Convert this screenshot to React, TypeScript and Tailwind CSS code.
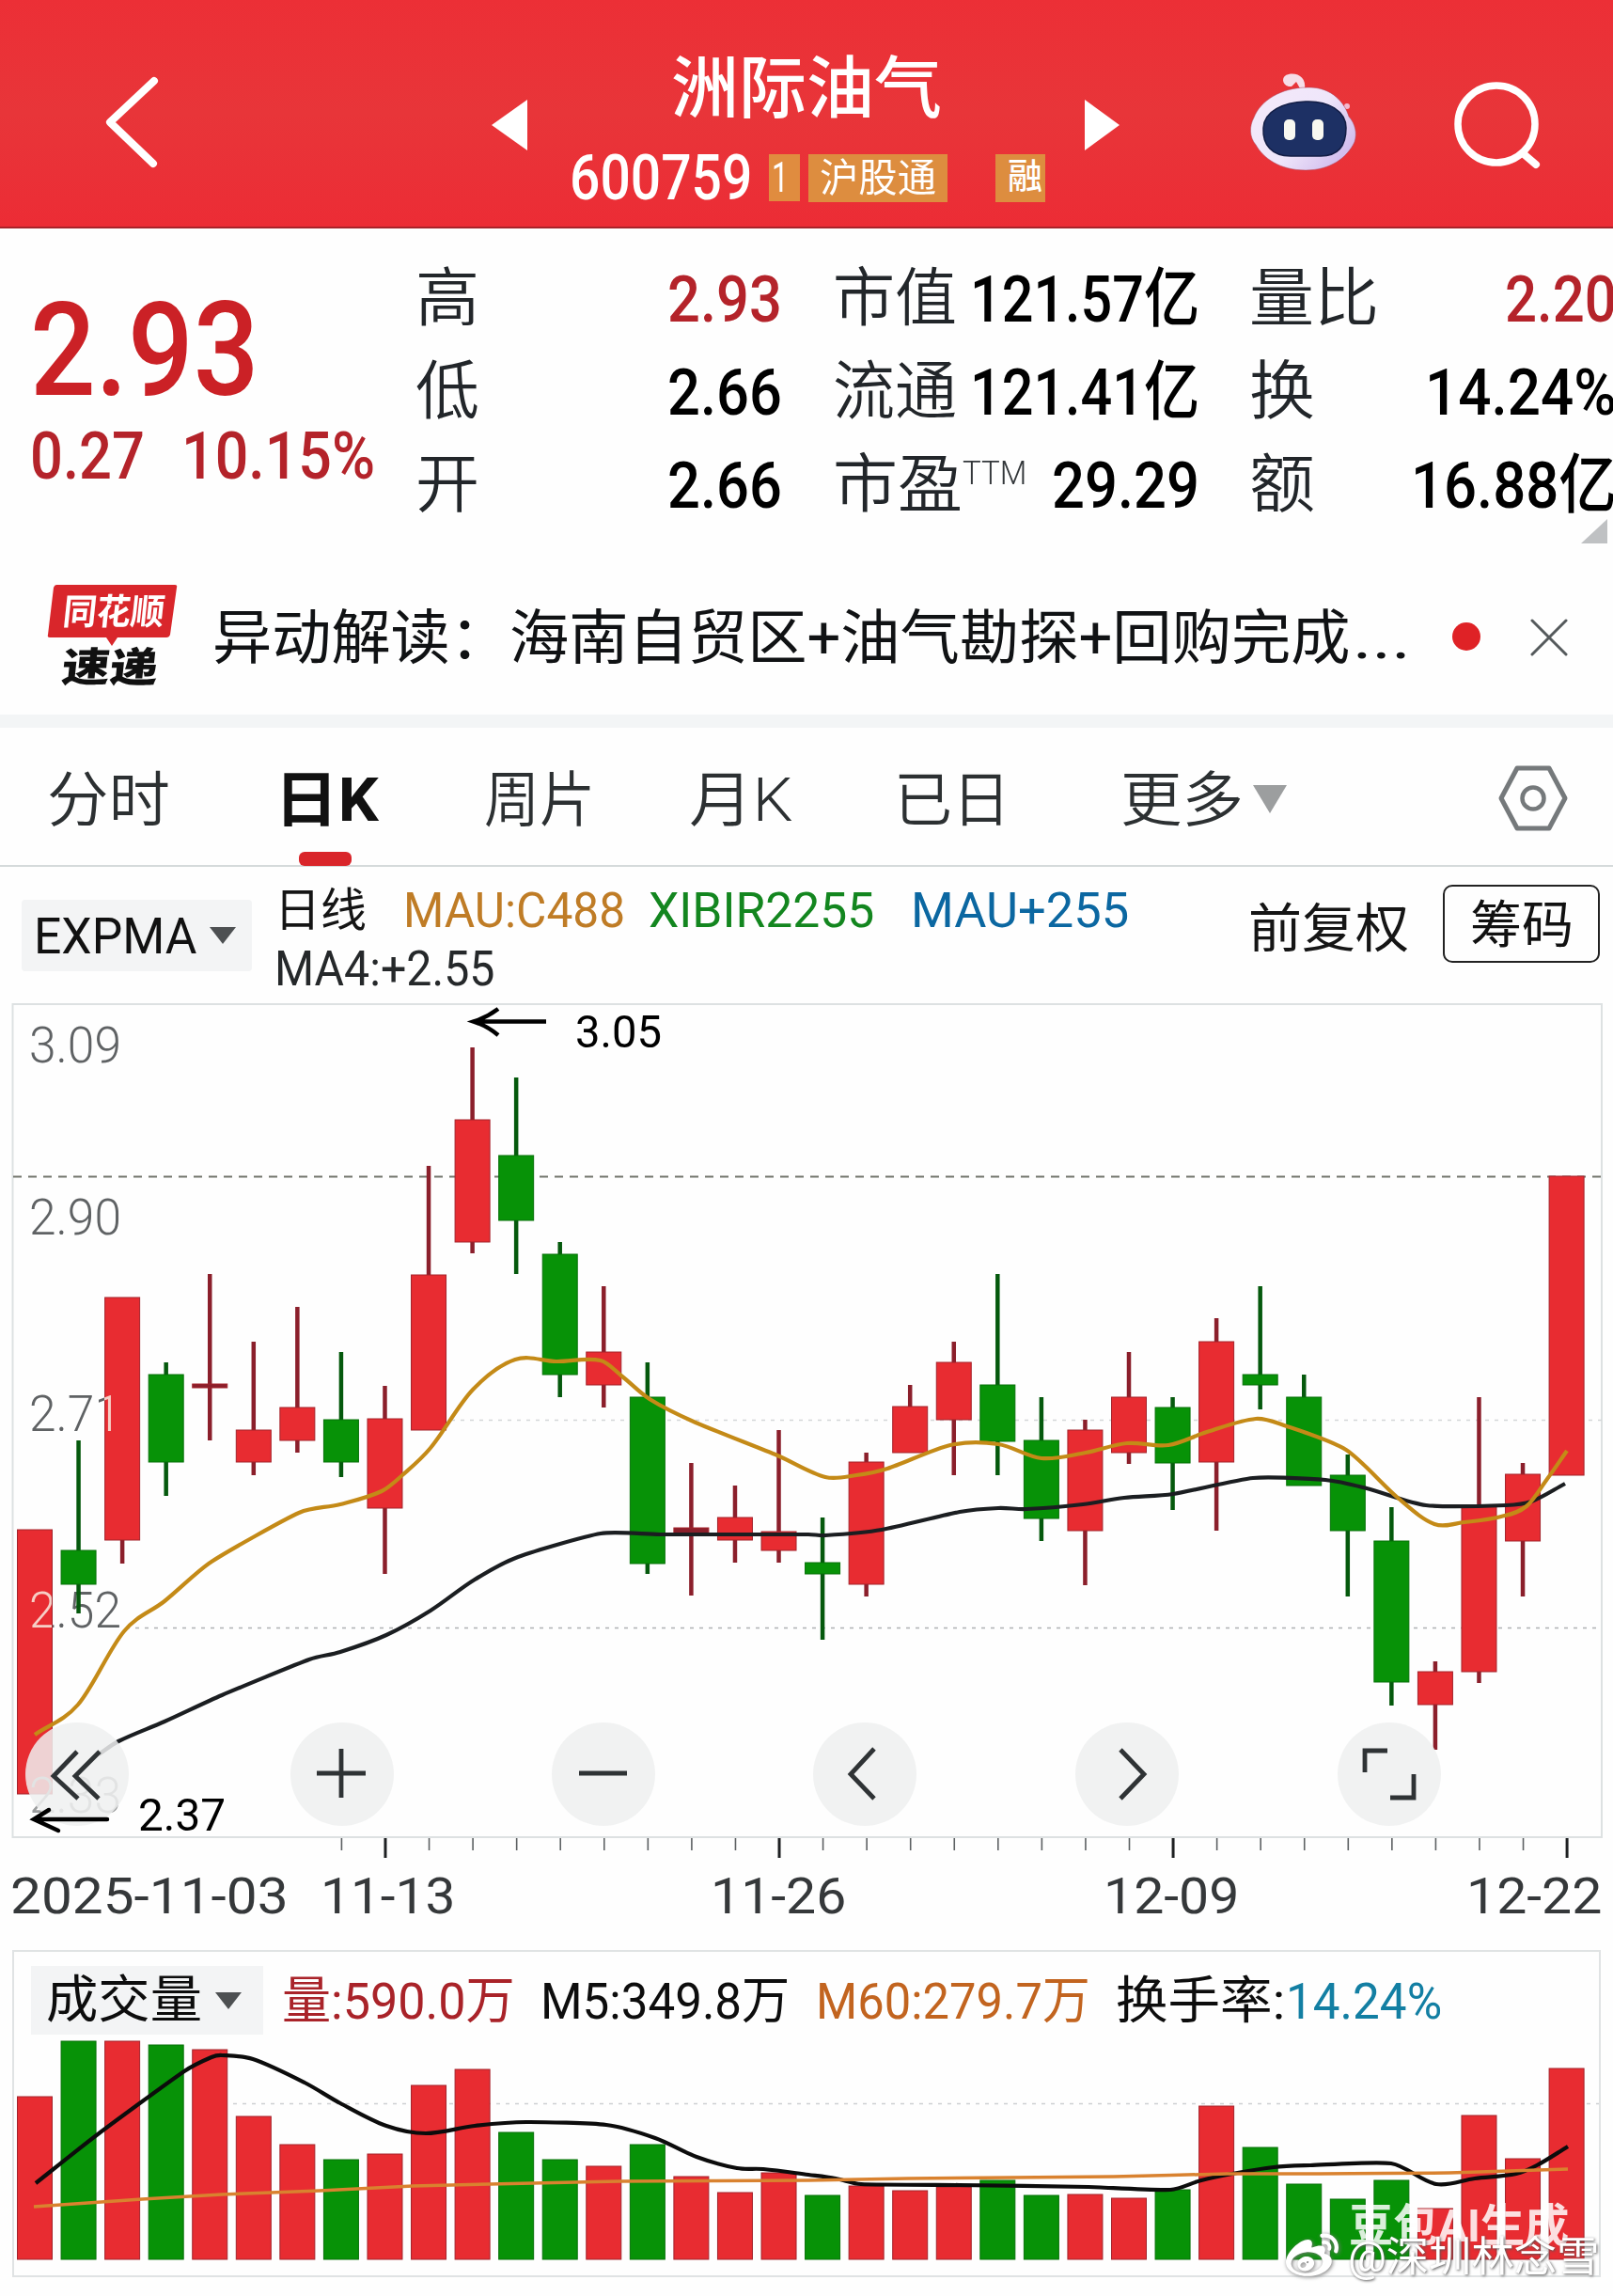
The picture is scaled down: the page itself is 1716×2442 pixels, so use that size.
import { useLayoutEffect, useRef, useState } from 'react';
import { FaWeibo } from 'react-icons/fa';

const FONT = 'font-[Roboto,"Noto_Sans_CJK_SC",sans-serif]';

const RED = '#e82c31';
const GREEN = '#079207';

const STEP = 46.56;
const FIRST = 37;
const BAR = 37;

type Candle = { high: number; top: number; bottom: number; low: number; up: boolean; vol: number };

const c = (high: number, top: number, bottom: number, low: number, up: boolean, vol: number): Candle => ({
  high, top, bottom, low, up, vol,
});

// y values in page pixels: high, body top, body bottom, low, up/down, volume bar top
const candles: Candle[] = [
  c(1627, 1627, 1908, 1908, true, 2230),
  c(1532, 1649, 1685, 1716, false, 2171),
  c(1380, 1380, 1638, 1663, true, 2171),
  c(1449, 1462, 1555, 1591, false, 2175),
  c(1355, 1472, 1476, 1532, true, 2180),
  c(1427, 1521, 1555, 1569, true, 2251),
  c(1390, 1497, 1532, 1545, true, 2281),
  c(1438, 1510, 1555, 1571, false, 2297),
  c(1474, 1509, 1604, 1674, true, 2291),
  c(1240, 1356, 1521, 1521, true, 2218),
  c(1114, 1191, 1321, 1333, true, 2201),
  c(1146, 1229, 1298, 1355, false, 2268),
  c(1321, 1334, 1462, 1486, false, 2297),
  c(1368, 1438, 1473, 1497, true, 2304),
  c(1449, 1486, 1663, 1674, false, 2281),
  c(1556, 1625, 1631, 1697, true, 2315),
  c(1580, 1614, 1638, 1662, true, 2332),
  c(1521, 1629, 1649, 1662, true, 2311),
  c(1614, 1662, 1674, 1744, false, 2335),
  c(1545, 1555, 1685, 1698, true, 2325),
  c(1473, 1496, 1545, 1545, true, 2330),
  c(1427, 1449, 1510, 1569, true, 2326),
  c(1355, 1473, 1533, 1569, false, 2319),
  c(1486, 1532, 1615, 1639, false, 2335),
  c(1510, 1521, 1628, 1686, true, 2334),
  c(1438, 1486, 1545, 1557, true, 2338),
  c(1486, 1497, 1556, 1606, false, 2329),
  c(1402, 1427, 1555, 1628, true, 2240),
  c(1368, 1462, 1473, 1499, false, 2284),
  c(1462, 1486, 1580, 1580, false, 2323),
  c(1547, 1569, 1628, 1698, false, 2339),
  c(1603, 1639, 1789, 1814, false, 2319),
  c(1767, 1778, 1813, 1861, true, 2349),
  c(1486, 1602, 1778, 1790, true, 2250),
  c(1556, 1568, 1639, 1698, true, 2296),
  c(1251, 1251, 1569, 1569, true, 2200),
];

const goldLine: [number, number][] = [
  [37, 1845], [83, 1813], [132, 1735], [175, 1703], [225, 1661], [318, 1609], [362, 1600], [406, 1586],
  [428, 1569], [458, 1540], [503, 1478], [548, 1446], [592, 1448], [639, 1447], [662, 1464], [691, 1488],
  [740, 1513], [827, 1548], [878, 1571], [911, 1569], [944, 1562], [1011, 1537], [1062, 1536], [1108, 1551],
  [1155, 1545], [1199, 1535], [1243, 1537], [1284, 1523], [1336, 1509], [1366, 1516], [1432, 1542],
  [1487, 1593], [1526, 1621], [1558, 1619], [1597, 1613], [1624, 1602], [1646, 1573], [1667, 1543],
];

const blackLine: [number, number][] = [
  [105, 1866], [126, 1852], [175, 1831], [236, 1803], [329, 1765], [362, 1757], [411, 1739], [458, 1713],
  [505, 1680], [551, 1656], [639, 1631], [702, 1632], [860, 1632], [878, 1633], [938, 1627], [1021, 1608],
  [1062, 1604], [1092, 1605], [1152, 1600], [1196, 1593], [1248, 1589], [1333, 1572], [1410, 1574],
  [1454, 1583], [1517, 1601], [1602, 1601], [1629, 1597], [1665, 1578],
];

const volBlack: [number, number][] = [
  [38, 2322], [104, 2270], [196, 2203], [225, 2188], [236, 2186], [269, 2190], [324, 2215], [362, 2237],
  [411, 2261], [453, 2269], [505, 2261], [560, 2257], [645, 2260], [697, 2274], [741, 2294], [784, 2306],
  [812, 2307], [860, 2313], [889, 2317], [916, 2323], [1020, 2324], [1158, 2326], [1245, 2329], [1278, 2319],
  [1311, 2312], [1355, 2305], [1394, 2303], [1480, 2301], [1528, 2323], [1569, 2317], [1613, 2312],
  [1635, 2303], [1668, 2283],
];

const volOrange: [number, number][] = [
  [36, 2347], [151, 2339], [236, 2334], [340, 2330], [439, 2325], [521, 2323], [658, 2320], [860, 2319],
  [966, 2317], [1185, 2315], [1306, 2312], [1404, 2312], [1542, 2311], [1668, 2307],
];

// Cubic through every point, slopes taken from the neighbours
const smooth = (pts: [number, number][]) => {
  const slope = (i: number) => {
    const a = pts[Math.max(i - 1, 0)];
    const b = pts[Math.min(i + 1, pts.length - 1)];
    return (b[1] - a[1]) / (b[0] - a[0]);
  };
  let d = `M${pts[0][0]} ${pts[0][1]}`;
  for (let i = 0; i < pts.length - 1; i++) {
    const [x1, y1] = pts[i];
    const [x2, y2] = pts[i + 1];
    const h = Math.min((x2 - x1) / 3, 16);
    d += ` C${x1 + h} ${y1 + slope(i) * h} ${x2 - h} ${y2 - slope(i + 1) * h} ${x2} ${y2}`;
  }
  return d;
};

// Text squeezed or stretched to an exact width
const Fit = ({ w, className = '', children }: { w: number; className?: string; children: string }) => {
  const ref = useRef<HTMLSpanElement>(null);
  const [scale, setScale] = useState(1);

  useLayoutEffect(() => {
    if (ref.current) setScale(w / ref.current.offsetWidth);
  }, [w]);

  return (
    <span className={`block shrink-0 whitespace-nowrap ${className}`} style={{ width: w }}>
      <span ref={ref} className="inline-block origin-left" style={{ transform: `scaleX(${scale})` }}>
        {children}
      </span>
    </span>
  );
};

const Header = () => (
  <header className="flex h-[243px] border-b-2 border-[#a8232a] bg-linear-to-b from-[#ec2f36] via-[#e83539] to-[#ec2c35] text-white">
    <svg className="mt-[80px] ml-[108px] h-[102px] w-[64px] shrink-0" viewBox="0 0 64 102" fill="none">
      <path d="M56 6 L9 50 L55 94" stroke="white" strokeWidth="8" strokeLinecap="round" strokeLinejoin="round" />
    </svg>
    <svg className="mt-[106px] ml-[351px] h-[54px] w-[38px] shrink-0" viewBox="0 0 38 54">
      <path d="M38 0 V54 L0 27 Z" fill="white" />
    </svg>
    <div className="ml-[45px] w-[514px] shrink-0 pt-[45px]">
      <Fit w={288} className="ml-[108px] text-[72px] leading-[100px] font-medium">洲际油气</Fit>
      <div className="mt-[18px] flex h-[52px] items-center">
        <Fit w={194} className="text-[67px] leading-[52px] font-medium">600759</Fit>
        <div className="ml-[18px] flex h-[50px] w-[33px] bg-[#e08c3f]">
          <Fit w={18} className="ml-[3px] text-[44px] leading-[50px]">1</Fit>
        </div>
        <div className="ml-[9px] flex h-[51px] w-[148px] justify-center bg-[#dd8d3f]">
          <Fit w={124} className="text-[42px] leading-[51px]">沪股通</Fit>
        </div>
        <div className="ml-[51px] flex h-[51px] w-[53px] items-center bg-[#dd8d3f]">
          <Fit w={37} className="ml-[13px] text-[37px] leading-[48px] font-medium">融</Fit>
        </div>
      </div>
    </div>
    <svg className="mt-[106px] ml-[34px] h-[54px] w-[37px] shrink-0" viewBox="0 0 37 54">
      <path d="M0 0 V54 L37 27 Z" fill="white" />
    </svg>
    <svg className="mt-[76px] ml-[138px] h-[108px] w-[116px] shrink-0" viewBox="0 0 116 108">
      <defs>
        <linearGradient id="head" x1="0" y1="0" x2="1" y2="0.6">
          <stop offset="0" stopColor="#f4e9fa" />
          <stop offset="0.6" stopColor="#efe6fa" />
          <stop offset="1" stopColor="#d3bfee" />
        </linearGradient>
      </defs>
      <path d="M42 16 C34 14 34 4 42 3 C52 1 61 7 59 19 L54 18 L50 11 L45 16 Z" fill="#f6dde8" />
      <circle cx="104" cy="37" r="3" fill="#f3b9cf" />
      <path d="M62 17 C88 16 102 34 106 48 C113 56 115 66 112 75 C104 92 86 105 60 105 C32 105 15 92 7 78 C0 70 0 58 5 49 C12 31 34 17 62 17 Z" fill="url(#head)" stroke="#a8485e" strokeOpacity="0.5" strokeWidth="1" />
      <path d="M60 32 C84 31 103 42 103 60 C103 80 94 90 76 90 H44 C24 90 14 78 15 60 C16 42 36 33 60 32 Z" fill="#1d3064" stroke="#121d45" strokeWidth="1.5" />
      <rect x="37" y="51" width="12" height="22" rx="5" fill="#f8f8f0" />
      <rect x="67" y="51" width="12" height="22" rx="5" fill="#f8f8f0" />
    </svg>
    <svg className="mt-[84px] ml-[98px] h-[98px] w-[100px] shrink-0" viewBox="0 0 100 98" fill="none" stroke="white">
      <circle cx="49" cy="48" r="41" strokeWidth="7.5" />
      <path d="M77 79 L91 91" strokeWidth="8" strokeLinecap="round" />
    </svg>
  </header>
);

type Cell = { label: string; lw: number; value: string; vw: number; red?: boolean; tag?: string };

const columns: { box: string; cells: Cell[] }[] = [
  {
    box: 'ml-[442px] w-[390px]',
    cells: [
      { label: '高', lw: 68, value: '2.93', vw: 122, red: true },
      { label: '低', lw: 68, value: '2.66', vw: 122 },
      { label: '开', lw: 68, value: '2.66', vw: 122 },
    ],
  },
  {
    box: 'ml-[54px] w-[390px]',
    cells: [
      { label: '市值', lw: 132, value: '121.57亿', vw: 244 },
      { label: '流通', lw: 132, value: '121.41亿', vw: 244 },
      { label: '市盈', lw: 138, value: '29.29', vw: 157, tag: 'TTM' },
    ],
  },
  {
    box: 'ml-[53px] w-[391px]',
    cells: [
      { label: '量比', lw: 138, value: '2.20', vw: 119, red: true },
      { label: '换', lw: 70, value: '14.24%', vw: 204 },
      { label: '额', lw: 70, value: '16.88亿', vw: 219 },
    ],
  },
];

const Quote = () => (
  <section className="relative flex h-[354px] overflow-hidden pt-[26px]">
    <div className="absolute top-[59px] left-[32px] text-[#cb2126]">
      <Fit w={244} className="text-[139px] leading-[142px] font-medium">2.93</Fit>
      <div className="mt-[6px] flex text-[70px] leading-[70px] font-medium text-[#b4232a]">
        <Fit w={122}>0.27</Fit>
        <Fit w={206} className="ml-[39px]">10.15%</Fit>
      </div>
    </div>
    {columns.map((col) => (
      <div key={col.box} className={`shrink-0 ${col.box}`}>
        {col.cells.map((cell) => (
          <div key={cell.label} className="flex h-[99px] items-center justify-between text-[68px] leading-[99px]">
            <div className="flex">
              <Fit w={cell.lw} className="font-[350] text-[#22262a]">{cell.label}</Fit>
              {cell.tag && <Fit w={68} className="-mt-[13px] text-[35px] font-light text-[#33373a]">{cell.tag}</Fit>}
            </div>
            <Fit w={cell.vw} className={`text-[69px] font-medium ${cell.red ? 'text-[#b4232a]' : 'text-black'}`}>
              {cell.value}
            </Fit>
          </div>
        ))}
      </div>
    ))}
    <svg className="absolute top-[309px] left-[1682px] h-[26px] w-[28px]" viewBox="0 0 28 26">
      <path d="M28 0 V26 H0 Z" fill="#bfc1c3" />
    </svg>
  </section>
);

const News = () => (
  <section className="flex h-[163px] items-start">
    <div className="relative mt-[24px] ml-[50px] h-[112px] w-[140px] shrink-0">
      <svg className="absolute inset-0 h-full w-full" viewBox="0 0 140 112">
        <path d="M10 1 H136 Q139 1 138 4 L131 54 Q130 57 127 57 H75 L69 66 L63 57 H3 Q0 57 1 54 L7 4 Q8 1 10 1 Z" fill="#d9262b" />
      </svg>
      <Fit w={108} className="absolute top-[9px] left-[17px] -skew-x-6 text-[38px] leading-[42px] font-bold text-white">同花顺</Fit>
      <Fit w={102} className="absolute top-[65px] left-[16px] -skew-x-6 text-[43px] leading-[48px] font-black text-[#111]">速递</Fit>
    </div>
    <Fit w={316} className="mt-[35px] ml-[36px] text-[63px] leading-[94px] text-[#101214]">异动解读：</Fit>
    <Fit w={895} className="mt-[35px] text-[63px] leading-[94px] text-[#101214]">海南自贸区+油气勘探+回购完成</Fit>
    <Fit w={62} className="mt-[35px] ml-[2px] text-[63px] leading-[94px] text-[#101214]">...</Fit>
    <span className="mt-[65px] ml-[44px] h-[30px] w-[30px] shrink-0 rounded-full bg-[#df2226]" />
    <svg className="mt-[61px] ml-[52px] h-[40px] w-[42px] shrink-0" viewBox="0 0 42 40">
      <path d="M3 2 L39 38 M39 2 L3 38" stroke="#555a5c" strokeWidth="3" strokeLinecap="round" />
    </svg>
  </section>
);

const tabs = [
  { name: '分时', w: 131, gap: 'ml-[50px]' },
  { name: '日K', w: 111, gap: 'ml-[111px]', active: true },
  { name: '周片', w: 118, gap: 'ml-[112px]' },
  { name: '月K', w: 110, gap: 'ml-[100px]' },
  { name: '已日', w: 124, gap: 'ml-[108px]' },
  { name: '更多', w: 131, gap: 'ml-[117px]' },
];

const Tabs = () => (
  <nav className="flex h-[162px] border-t-[14px] border-b-2 border-t-[#f3f5f6] border-b-[#d5dadb]">
    {tabs.map((tab) => (
      <div key={tab.name} className={`relative shrink-0 ${tab.gap}`}>
        <Fit w={tab.w} className={`text-[64px] leading-[156px] ${tab.active ? 'font-bold text-[#111]' : 'font-[350] text-[#2c3032]'}`}>
          {tab.name}
        </Fit>
        {tab.active && <span className="absolute top-[132px] left-[26px] h-[15px] w-[56px] rounded-[6px] bg-[#d9252a]" />}
      </div>
    ))}
    <svg className="mt-[61px] ml-[10px] h-[30px] w-[36px] shrink-0" viewBox="0 0 36 30">
      <path d="M0 0 H36 L18 30 Z" fill="#9c9e9f" />
    </svg>
    <svg className="mt-[39px] ml-[223px] h-[72px] w-[78px] shrink-0" viewBox="0 0 78 72" fill="none" stroke="#75797b">
      <path d="M22 4 H56 L73 36 L56 68 H22 L5 36 Z" strokeWidth="5" strokeLinejoin="round" />
      <circle cx="39" cy="36" r="11.5" strokeWidth="4.5" />
    </svg>
  </nav>
);

const Caret = ({ className }: { className: string }) => (
  <svg className={`h-[18px] w-[28px] shrink-0 ${className}`} viewBox="0 0 28 18">
    <path d="M0 0 H28 L14 18 Z" fill="#4d5052" />
  </svg>
);

const Indicators = () => (
  <section className="flex h-[145px] items-start">
    <div className="mt-[35px] ml-[23px] flex h-[76px] w-[245px] shrink-0 items-center rounded bg-[#f3f4f5]">
      <Fit w={173} className="ml-[13px] pt-[2px] text-[54px] leading-[76px] text-[#111]">EXPMA</Fit>
      <Caret className="ml-[14px]" />
    </div>
    <div className="mt-[14px] ml-[24px] w-[920px] shrink-0 text-[52px] leading-[66px]">
      <div className="flex">
        <Fit w={98} className="text-[49px] text-[#151515]">日线</Fit>
        <Fit w={236} className="ml-[39px] text-[#bf7c26]">MAU:C488</Fit>
        <Fit w={240} className="ml-[25px] text-[#13861f]">XIBIR2255</Fit>
        <Fit w={232} className="ml-[39px] text-[#0b67a1]">MAU+255</Fit>
      </div>
      <Fit w={234} className="-mt-[4px] text-[#25282a]">MA4:+2.55</Fit>
    </div>
    <Fit w={171} className="mt-[26px] ml-[116px] text-[56px] leading-[80px] text-[#151515]">前复权</Fit>
    <div className="mt-[19px] ml-[36px] flex h-[83px] w-[167px] shrink-0 justify-center rounded-[10px] border-2 border-[#222]">
      <Fit w={110} className="text-[54px] leading-[83px] text-[#111]">筹码</Fit>
    </div>
  </section>
);

const controls = [
  { x: 'left-[27px]', d: 'M55 31 L30 57 L56 81 M79 31 L53 57 L78 81' },
  { x: 'left-[309px]', d: 'M28 54 H80 M54 28 V80' },
  { x: 'left-[587px]', d: 'M29 54 H80' },
  { x: 'left-[865px]', d: 'M65 28 L40 55 L65 81' },
  { x: 'left-[1144px]', d: 'M48 29 L73 55 L48 81' },
  { x: 'left-[1423px]', d: 'M53 30 H29 V53 M56 80 H81 V55' },
];

const gridLabels = [
  { text: '3.09', y: 1130 },
  { text: '2.90', y: 1313 },
  { text: '2.71', y: 1522 },
  { text: '2.52', y: 1731 },
];

const PriceChart = () => (
  <section className="relative h-[913px]">
    <svg className="block h-[913px] w-[1716px]" viewBox="0 1067 1716 913">
      <path d="M13.5 1068 H1704 V1954 H13.5 Z" fill="none" stroke="#dde1e2" strokeWidth="2" />
      <path d="M14 1251.500 H1704" stroke="#72756c" strokeWidth="1.8" strokeDasharray="9 7" />
      <path d="M480 1510.500 H1704" stroke="#d4d6d8" strokeWidth="1.6" strokeDasharray="4 6" />
      <path d="M134 1731.500 H1704" stroke="#aeb1b3" strokeWidth="1.6" strokeDasharray="4 6" />
      {gridLabels.map((l) => (
        <text key={l.text} x="31" y={l.y} fontSize="53" textLength="98" lengthAdjust="spacingAndGlyphs" fill="#5f6264" fontWeight="350">
          {l.text}
        </text>
      ))}
      {candles.map((k, i) => {
        const x = FIRST + i * STEP;
        return (
          <g key={i}>
            <path d={`M${x} ${k.high} V${k.low}`} stroke={k.up ? '#8b1f2b' : '#05590d'} strokeWidth="4.5" />
            <rect
              x={x - BAR / 2}
              y={k.top}
              width={BAR}
              height={k.bottom - k.top}
              fill={k.bottom - k.top < 8 ? '#8b1f2b' : k.up ? RED : GREEN}
              stroke={k.up ? '#a3222b' : '#067008'}
              strokeWidth="1"
            />
          </g>
        );
      })}
      <clipPath id="overlap">
        <path d="M18 1627 h37 v281 h-37 Z M111 1380 h38 v258 h-38 Z" />
      </clipPath>
      <g clipPath="url(#overlap)" fill="#f6cfc6" fontSize="53" fontWeight="350">
        <text x="31" y="1522" textLength="98" lengthAdjust="spacingAndGlyphs">2.71</text>
        <text x="31" y="1731" textLength="98" lengthAdjust="spacingAndGlyphs">2.52</text>
      </g>
      <path d={smooth(blackLine)} fill="none" stroke="#1b1e21" strokeWidth="4.2" strokeLinejoin="round" />
      <path d={smooth(goldLine)} fill="none" stroke="#c48a17" strokeWidth="4.2" strokeLinejoin="round" />
      <path d="M581 1086.500 H505 M530 1073 Q518 1082 504 1086.500 Q518 1091 530 1101" fill="none" stroke="black" strokeWidth="4.5" />
      <text x="612" y="1114" fontSize="49" textLength="92" lengthAdjust="spacingAndGlyphs">3.05</text>
      <text x="147" y="1947" fontSize="49" textLength="93" lengthAdjust="spacingAndGlyphs">2.37</text>
      <text x="31" y="1928" fontSize="53" textLength="98" lengthAdjust="spacingAndGlyphs" fill="#9a9c9d" fontWeight="300">2.33</text>
      {candles.map((_, i) => {
        if (i < 7) return null;
        const major = (i - 8) % 9 === 0;
        return (
          <path
            key={i}
            d={`M${FIRST + i * STEP + 0.5} 1955 V${major ? 1976 : 1968}`}
            stroke={major ? '#1e2022' : '#5d6163'}
            strokeWidth={major ? 3 : 1.6}
          />
        );
      })}
    </svg>
    {controls.map((b) => (
      <button key={b.x} className={`absolute top-[765px] h-[110px] w-[110px] rounded-full bg-[#eff0f0]/85 ${b.x}`}>
        <svg className="h-full w-full" viewBox="0 0 110 110" fill="none">
          <path d={b.d} stroke="#2f3335" strokeWidth="4.8" />
        </svg>
      </button>
    ))}
    <svg className="absolute top-[849px] left-[30px] h-[36px] w-[90px]" viewBox="0 0 90 36" fill="none">
      <path d="M84 19 H8 M32 31 L6 19 Q14 14 22 9" stroke="black" strokeWidth="4.5" strokeLinecap="round" />
    </svg>
  </section>
);

const dates = [
  { text: '2025-11-03', w: 296, gap: 'ml-[11px]' },
  { text: '11-13', w: 143, gap: 'ml-[34px]' },
  { text: '11-26', w: 144, gap: 'ml-[272px]' },
  { text: '12-09', w: 144, gap: 'ml-[274px]' },
  { text: '12-22', w: 144, gap: 'ml-[242px]' },
];

const Dates = () => (
  <div className="flex h-[94px] text-[54px] leading-[74px] text-[#35383a]">
    {dates.map((d) => (
      <Fit key={d.text} w={d.w} className={d.gap}>{d.text}</Fit>
    ))}
  </div>
);

const Volume = () => (
  <section className="relative mx-[13px] h-[348px] border-2 border-[#e0e3e4]">
    <div className="flex h-[106px] items-start text-[54px] leading-[75px]">
      <div className="mt-[15px] ml-[18px] flex h-[73px] w-[247px] shrink-0 items-center bg-[#f3f4f5]">
        <Fit w={166} className="ml-[16px] text-[#0d0d0d]">成交量</Fit>
        <Caret className="ml-[14px]" />
      </div>
      <Fit w={248} className="mt-[15px] ml-[20px] text-[#a92329]">量:590.0万</Fit>
      <Fit w={265} className="mt-[15px] ml-[27px] text-[#0d0d0d]">M5:349.8万</Fit>
      <Fit w={292} className="mt-[15px] ml-[28px] text-[#c2641f]">M60:279.7万</Fit>
      <Fit w={180} className="mt-[15px] ml-[27px] text-[#0d0d0d]">换手率:</Fit>
      <Fit w={166} className="mt-[15px] ml-[1px] text-[#137fa3]">14.24%</Fit>
    </div>
    <svg className="block h-[238px] w-[1686px]" viewBox="15 2182 1686 238" overflow="visible">
      <path d="M248 2237.500 H1701" stroke="#cdd0d2" strokeWidth="1.6" strokeDasharray="4 6" />
      {candles.map((k, i) => (
        <rect
          key={i}
          x={FIRST + i * STEP - BAR / 2}
          y={k.vol}
          width={BAR}
          height={2403 - k.vol}
          fill={k.up ? RED : GREEN}
          stroke={k.up ? '#a3222b' : '#067008'}
          strokeWidth="1"
        />
      ))}
      <path d={smooth(volBlack)} fill="none" stroke="#0c0c0c" strokeWidth="4.2" />
      <path d={smooth(volOrange)} fill="none" stroke="#d9822f" strokeWidth="3.500" />
    </svg>
    <Fit w={234} className="absolute top-[256px] left-[1420px] text-[48px] leading-[72px] font-bold text-white/85">豆包AI生成</Fit>
    <FaWeibo className="absolute top-[296px] left-[1350px] h-[56px] w-[62px] text-white drop-shadow-[1px_1px_2px_#777]" />
    <Fit w={268} className="absolute top-[292px] left-[1419px] text-[44px] leading-[66px] text-white [text-shadow:1px_1px_3px_#555]">
      @深圳林念雪
    </Fit>
  </section>
);

export default function App() {
  return (
    <main className={`h-[2442px] w-[1716px] overflow-hidden bg-[#fefefe] ${FONT}`}>
      <Header />
      <Quote />
      <News />
      <Tabs />
      <Indicators />
      <PriceChart />
      <Dates />
      <Volume />
    </main>
  );
}
